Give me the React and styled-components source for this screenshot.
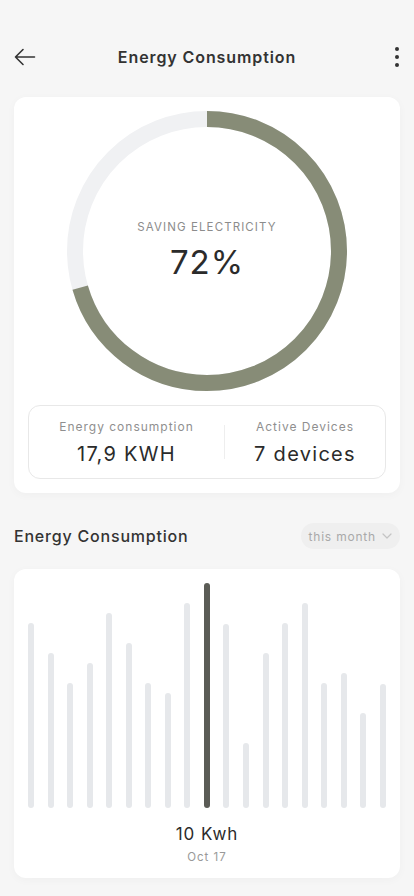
import React from "react";
import styled, { createGlobalStyle } from "styled-components";

const GlobalStyle = createGlobalStyle`
  * { box-sizing: border-box; }
  body {
    margin: 0;
    background: #f6f6f6;
    font-family: Inter, "Noto Sans", "Liberation Sans", sans-serif;
  }
`;

const Page = styled.div`
  width: 414px;
  min-height: 896px;
  background: #f6f6f6;
  padding: 40px 14px 16px;
`;

const Header = styled.div`
  height: 34px;
  display: flex;
  align-items: center;
  justify-content: space-between;
  margin-bottom: 23px;
`;

const IconButton = styled.button`
  width: 24px;
  height: 34px;
  padding: 0;
  border: none;
  background: transparent;
  display: flex;
  align-items: center;
  justify-content: ${(p) => (p.$end ? "flex-end" : "flex-start")};
  color: #333;
`;

const Title = styled.h1`
  margin: 0;
  font-size: 16px;
  font-weight: 600;
  letter-spacing: 0.9px;
  color: #333;
`;

const Card = styled.div`
  background: #fff;
  border-radius: 12px;
  box-shadow: 0 2px 10px rgba(0, 0, 0, 0.03);
  padding: ${(p) => p.$pad};
`;

const RingWrap = styled.div`
  position: relative;
  width: 280px;
  height: 280px;
  margin: 0 auto;
`;

const RingCenter = styled.div`
  position: absolute;
  inset: 0;
  display: flex;
  flex-direction: column;
  align-items: center;
  justify-content: center;
`;

const RingLabel = styled.div`
  font-size: 11.5px;
  letter-spacing: 1.1px;
  color: #8c8c8c;
`;

const RingValue = styled.div`
  margin-top: 8px;
  font-size: 33px;
  letter-spacing: 1px;
  color: #2b2b2b;
`;

const Stats = styled.div`
  margin-top: 14px;
  border: 1px solid #e8e8e8;
  border-radius: 12px;
  height: 74px;
  display: flex;
  align-items: center;
`;

const Stat = styled.div`
  width: ${(p) => p.$width};
  flex: ${(p) => (p.$width ? "none" : "1")};
  display: flex;
  flex-direction: column;
  align-items: center;
  gap: 8px;
`;

const Divider = styled.div`
  width: 1px;
  height: 34px;
  background: #eeeeee;
`;

const StatLabel = styled.div`
  font-size: 12px;
  letter-spacing: 1px;
  color: #8f8f8f;
`;

const StatValue = styled.div`
  font-size: 20px;
  letter-spacing: 1.3px;
  color: #2b2b2b;
`;

const SectionHeader = styled.div`
  display: flex;
  align-items: center;
  justify-content: space-between;
  margin: 30px 0 20px;
`;

const SectionTitle = styled.h2`
  margin: 0;
  font-size: 16px;
  font-weight: 500;
  letter-spacing: 0.8px;
  color: #333;
`;

const Dropdown = styled.button`
  height: 26px;
  padding: 0 8px 0 8px;
  border: none;
  border-radius: 13px;
  background: #efefef;
  display: flex;
  align-items: center;
  gap: 6px;
  font-family: inherit;
  font-size: 12px;
  letter-spacing: 0.8px;
  color: #a9a9a9;
`;

const Bars = styled.div`
  height: 226px;
  display: flex;
  align-items: flex-end;
  justify-content: space-between;
`;

const Bar = styled.div`
  width: 6px;
  border-radius: 3px;
  background: ${(p) => (p.$active ? "#5b5c56" : "#e6e8eb")};
`;

const ChartValue = styled.div`
  margin-top: 16px;
  text-align: center;
  font-size: 17px;
  letter-spacing: 1px;
  color: #2b2b2b;
`;

const ChartDate = styled.div`
  margin-top: 6px;
  text-align: center;
  font-size: 11.5px;
  letter-spacing: 1px;
  color: #999;
`;

const heights = [185, 155, 125, 145, 195, 165, 125, 115, 205, 225, 184, 65, 155, 185, 205, 125, 135, 95, 124];

const Ring = ({ value }) => {
  const r = 132;
  const c = 2 * Math.PI * r;
  return (
    <svg width="280" height="280" viewBox="0 0 280 280">
      <circle cx="140" cy="140" r={r} fill="none" stroke="#f0f1f3" strokeWidth="16" />
      <circle
        cx="140"
        cy="140"
        r={r}
        fill="none"
        stroke="#878c77"
        strokeWidth="16"
        strokeDasharray={`${c * value} ${c}`}
        transform="rotate(-90 140 140)"
      />
    </svg>
  );
};

export default function App() {
  return (
    <Page>
      <GlobalStyle />
      <Header>
        <IconButton>
          <svg width="22" height="18" viewBox="0 0 22 18" fill="none" stroke="#333" strokeWidth="1.6" strokeLinecap="round" strokeLinejoin="round">
            <path d="M20.5 9H1.5M9 1.5L1.5 9L9 16.5" />
          </svg>
        </IconButton>
        <Title>Energy Consumption</Title>
        <IconButton $end>
          <svg width="6" height="22" viewBox="0 0 6 22" fill="#333">
            <circle cx="3" cy="3" r="2" />
            <circle cx="3" cy="11" r="2" />
            <circle cx="3" cy="19" r="2" />
          </svg>
        </IconButton>
      </Header>

      <Card $pad="14px 14px 14px">
        <RingWrap>
          <Ring value={0.705} />
          <RingCenter>
            <RingLabel>SAVING ELECTRICITY</RingLabel>
            <RingValue>72%</RingValue>
          </RingCenter>
        </RingWrap>
        <Stats>
          <Stat $width="195px">
            <StatLabel>Energy consumption</StatLabel>
            <StatValue>17,9 KWH</StatValue>
          </Stat>
          <Divider />
          <Stat>
            <StatLabel>Active Devices</StatLabel>
            <StatValue>7 devices</StatValue>
          </Stat>
        </Stats>
      </Card>

      <SectionHeader>
        <SectionTitle>Energy Consumption</SectionTitle>
        <Dropdown>
          this month
          <svg width="10" height="6" viewBox="0 0 10 6" fill="none" stroke="#c4c4c4" strokeWidth="1.2" strokeLinecap="round" strokeLinejoin="round">
            <path d="M1 1l4 4 4-4" />
          </svg>
        </Dropdown>
      </SectionHeader>

      <Card $pad="13px 14px 14px">
        <Bars>
          {heights.map((h, i) => (
            <Bar key={i} $active={i === 9} style={{ height: h }} />
          ))}
        </Bars>
        <ChartValue>10 Kwh</ChartValue>
        <ChartDate>Oct 17</ChartDate>
      </Card>
    </Page>
  );
}
